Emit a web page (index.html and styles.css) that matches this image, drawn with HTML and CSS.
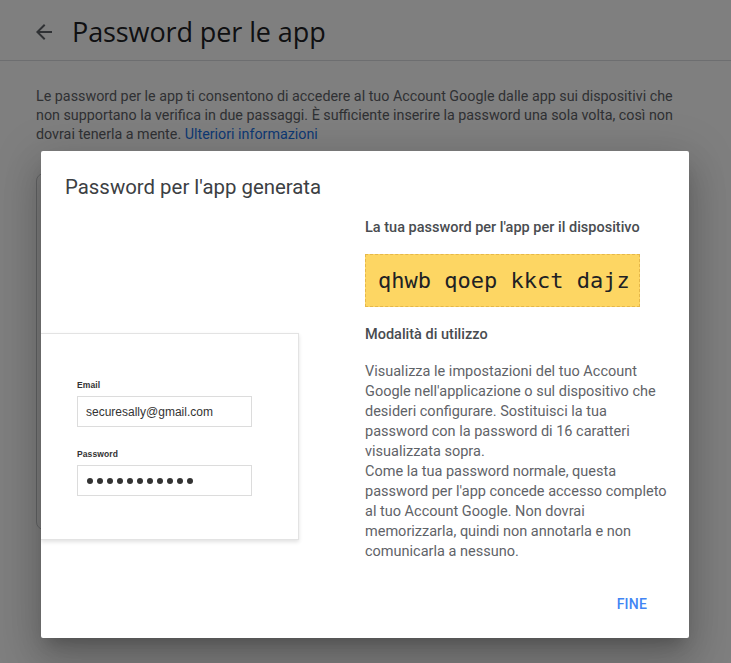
FILE: index.html
```html
<!DOCTYPE html>
<html lang="it">
<head>
<meta charset="utf-8">
<title>Password per le app</title>
<link rel="stylesheet" href="styles.css">
</head>
<body>
<div class="page">
  <header class="topbar">
    <svg class="back" viewBox="0 0 24 24" width="24" height="24"><path d="M20 11H7.83l5.59-5.59L12 4l-8 8 8 8 1.41-1.41L7.83 13H20v-2z" fill="#5f6368"/></svg>
    <h1 class="page-title">Password per le app</h1>
  </header>
  <main class="content">
    <p class="intro">Le password per le app ti consentono di accedere al tuo Account Google dalle app sui dispositivi che non supportano la verifica in due passaggi. È sufficiente inserire la password una sola volta, così non dovrai tenerla a mente. <a class="link" href="#">Ulteriori informazioni</a></p>
    <div class="bg-card"></div>
  </main>
</div>

<div class="scrim"></div>

<div class="dialog" role="dialog">
  <h2 class="dialog-title">Password per l'app generata</h2>
  <div class="dialog-body">
    <div class="illus-col">
      <div class="illus-card">
        <div class="field-label">Email</div>
        <div class="field-box">securesally@gmail.com</div>
        <div class="field-label second">Password</div>
        <div class="field-box dots"><span></span><span></span><span></span><span></span><span></span><span></span><span></span><span></span><span></span><span></span><span></span></div>
      </div>
    </div>
    <div class="info-col">
      <div class="sub-head">La tua password per l'app per il dispositivo</div>
      <div class="code-box">qhwb qoep kkct dajz</div>
      <div class="sub-head usage">Modalità di utilizzo</div>
      <p class="usage-text">Visualizza le impostazioni del tuo Account Google nell'applicazione o sul dispositivo che desideri configurare. Sostituisci la tua password con la password di 16 caratteri visualizzata sopra.<br>Come la tua password normale, questa password per l'app concede accesso completo al tuo Account Google. Non dovrai memorizzarla, quindi non annotarla e non comunicarla a nessuno.</p>
    </div>
  </div>
  <div class="dialog-actions">
    <button class="btn-text" type="button">FINE</button>
  </div>
</div>
</body>
</html>
```
FILE: styles.css
```css
* { box-sizing: border-box; }
html, body { margin: 0; padding: 0; }
body {
  width: 731px;
  height: 663px;
  overflow: hidden;
  background: #ffffff;
  font-family: Roboto, "Liberation Sans", Arial, sans-serif;
  position: relative;
}

.topbar {
  height: 61px;
  display: flex;
  align-items: center;
  padding: 0 0 0 32px;
  border-bottom: 1px solid #dadce0;
}
.back { flex: none; margin-top: 3px; }
.page-title {
  margin: 0 0 0 16px;
  font-family: "Open Sans", Roboto, sans-serif;
  font-weight: 400;
  font-size: 27px;
  line-height: 36px;
  color: #202124;
  letter-spacing: -0.1px;
  padding-top: 4px;
}

.content { padding: 26px 36px 0 36px; }
.intro {
  margin: 0;
  font-size: 14.3px;
  line-height: 19px;
  color: #5f6368;
}
.link { color: #1a73e8; text-decoration: none; }

.bg-card {
  margin: 29px 38px 0 0;
  height: 357px;
  border: 1px solid #c8cacd;
  border-radius: 8px;
}

.scrim {
  position: absolute;
  inset: 0;
  background: rgba(0, 0, 0, 0.5);
}

.dialog {
  position: absolute;
  left: 41px;
  top: 151px;
  width: 648px;
  height: 487px;
  background: #ffffff;
  border-radius: 2px;
  overflow: hidden;
  display: flex;
  flex-direction: column;
  box-shadow: 0 11px 15px -7px rgba(0,0,0,.2), 0 24px 38px 3px rgba(0,0,0,.14), 0 9px 46px 8px rgba(0,0,0,.12);
}
.dialog-title {
  margin: 0;
  padding: 24px 24px 0 24px;
  font-size: 20.4px;
  line-height: 24px;
  font-weight: 400;
  color: #3c4043;
}

.dialog-body {
  display: grid;
  grid-template-columns: 300px 304px;
  column-gap: 24px;
}

.illus-col { padding-top: 134px; }
.illus-card {
  width: 258px;
  height: 207px;
  background: #fff;
  border: 1px solid #e3e3e3;
  border-left: none;
  box-shadow: 0 2px 4px rgba(0,0,0,.12);
  padding: 45px 0 0 36px;
  font-family: "Liberation Sans", Arial, sans-serif;
}
.field-label {
  font-size: 8.5px;
  line-height: 12px;
  color: #333;
  font-weight: 700;
  letter-spacing: 0.1px;
}
.field-label.second { margin-top: 21px; }
.field-box {
  margin-top: 5px;
  width: 175px;
  height: 31px;
  border: 1px solid #dcdcdc;
  padding: 0 0 0 8px;
  display: flex;
  align-items: center;
  font-size: 12px;
  color: #333;
}
.field-box.dots { gap: 4px; padding-left: 9px; }
.field-box.dots span {
  width: 6px;
  height: 6px;
  border-radius: 50%;
  background: #333;
}

.info-col { padding-top: 19px; }
.sub-head {
  font-size: 14.5px;
  line-height: 20px;
  font-weight: 500;
  color: #494c50;
}
.code-box {
  margin-top: 16px;
  width: 275px;
  height: 53px;
  background: #fdd663;
  border: 1px dashed #e6b84a;
  padding: 0 0 0 12px;
  font-family: "DejaVu Sans Mono", "Liberation Mono", monospace;
  font-size: 22px;
  line-height: 51px;
  color: #202124;
  white-space: nowrap;
}
.sub-head.usage { margin-top: 18px; }
.usage-text {
  margin: 17px 0 0 0;
  width: 304px;
  font-size: 14.5px;
  line-height: 20px;
  color: #5f6368;
}

.dialog-actions {
  margin-top: auto;
  display: flex;
  justify-content: flex-end;
  padding: 0 34px 16px 0;
}
.btn-text {
  background: none;
  border: none;
  height: 36px;
  padding: 0 8px;
  font-family: Roboto, sans-serif;
  font-size: 14px;
  font-weight: 500;
  color: #4285f4;
  letter-spacing: 0.2px;
}
```
